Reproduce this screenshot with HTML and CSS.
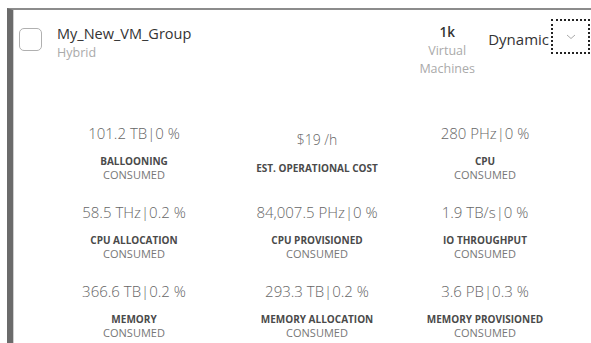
FILE: index.html
```html
<!DOCTYPE html>
<html lang="en">
<head>
    <meta charset="UTF-8">
    <meta name="viewport" content="width=device-width, initial-scale=1.0">
    <title>VM Group</title>
    <link rel="stylesheet" href="styles.css">
</head>
<body>
    <div class="card">
        <!-- Group header -->
        <div class="card-header">
            <span class="checkbox"></span>
            <div class="group-name">
                <div class="title">My_New_VM_Group</div>
                <div class="subtitle">Hybrid</div>
            </div>
            <div class="vm-count">
                <div class="count">1k</div>
                <div class="count-label">Virtual<br>Machines</div>
            </div>
            <div class="group-type">Dynamic</div>
            <button class="toggle" type="button">
                <svg width="10" height="6" viewBox="0 0 10 6"><path d="M1 1 L5 4.5 L9 1" fill="none" stroke="#aaa" stroke-width="1"/></svg>
            </button>
        </div>

        <!-- Metrics -->
        <div class="metrics">
            <div class="metric">
                <div class="value">101.2 TB|0 %</div>
                <div class="label">Ballooning</div>
                <div class="sub">Consumed</div>
            </div>
            <div class="metric">
                <div class="value small">$19 /h</div>
                <div class="label">Est. Operational Cost</div>
            </div>
            <div class="metric">
                <div class="value">280 PHz|0 %</div>
                <div class="label">CPU</div>
                <div class="sub">Consumed</div>
            </div>
            <div class="metric">
                <div class="value">58.5 THz|0.2 %</div>
                <div class="label">CPU Allocation</div>
                <div class="sub">Consumed</div>
            </div>
            <div class="metric">
                <div class="value">84,007.5 PHz|0 %</div>
                <div class="label">CPU Provisioned</div>
                <div class="sub">Consumed</div>
            </div>
            <div class="metric">
                <div class="value">1.9 TB/s|0 %</div>
                <div class="label">IO Throughput</div>
                <div class="sub">Consumed</div>
            </div>
            <div class="metric">
                <div class="value">366.6 TB|0.2 %</div>
                <div class="label">Memory</div>
                <div class="sub">Consumed</div>
            </div>
            <div class="metric">
                <div class="value">293.3 TB|0.2 %</div>
                <div class="label">Memory Allocation</div>
                <div class="sub">Consumed</div>
            </div>
            <div class="metric">
                <div class="value">3.6 PB|0.3 %</div>
                <div class="label">Memory Provisioned</div>
                <div class="sub">Consumed</div>
            </div>
        </div>
    </div>
</body>
</html>
```

FILE: styles.css
```css
body {
    font-family: 'Open Sans', 'Liberation Sans', sans-serif;
    background-color: #fff;
    margin: 0;
    overflow: hidden;
}

.card {
    margin: 8px 0 0 7px;
    padding: 0 3px 0 6px;
    border-left: 6px solid #6b6b6b;
    border-top: 2px solid #8c8c8c;
    box-shadow: inset 1px 0 0 #cfcfcf;
    height: 333px;
}

.card-header {
    display: flex;
    align-items: flex-start;
    padding-top: 10px;
}

.checkbox {
    width: 21px;
    height: 21px;
    margin-top: 8px;
    border: 1.5px solid #b0b0b0;
    border-radius: 5px;
    flex-shrink: 0;
}

.group-name {
    flex: 1;
    margin: 3px 0 0 15px;
}

.title {
    font-size: 14.5px;
    line-height: 21px;
    color: #333;
}

.subtitle {
    font-size: 12.5px;
    line-height: 18px;
    color: #aaa;
}

.vm-count {
    width: 60px;
    margin: 3px 11px 0 0;
    text-align: center;
}

.count {
    font-size: 13.5px;
    line-height: 19px;
    font-weight: 600;
    color: #333;
}

.count-label {
    font-size: 12.5px;
    line-height: 18px;
    color: #aaa;
}

.group-type {
    margin-top: 9px;
    font-size: 15px;
    line-height: 20px;
    color: #333;
}

.toggle {
    width: 35px;
    height: 31px;
    margin: 1px 0 0 4px;
    padding: 0;
    border: none;
    background: #fff;
    outline: 2px dotted #222;
    display: flex;
    align-items: center;
    justify-content: center;
}

/* metric grid */
.metrics {
    display: grid;
    grid-template-columns: 174px 192px 144px;
    grid-auto-rows: 79px;
    margin: 35px 0 0 28px;
}

.metric {
    display: flex;
    flex-direction: column;
    align-items: center;
    justify-content: center;
    text-align: center;
}

.value {
    font-size: 15px;
    line-height: 20px;
    font-weight: 300;
    color: #666;
    margin-bottom: 11px;
    white-space: nowrap;
}

.value.small {
    font-size: 14px;
}

.label {
    font-size: 10px;
    line-height: 14px;
    font-weight: 700;
    color: #4a4a4a;
    text-transform: uppercase;
    white-space: nowrap;
}

.sub {
    font-size: 11px;
    line-height: 14px;
    color: #777;
    text-transform: uppercase;
}
```
